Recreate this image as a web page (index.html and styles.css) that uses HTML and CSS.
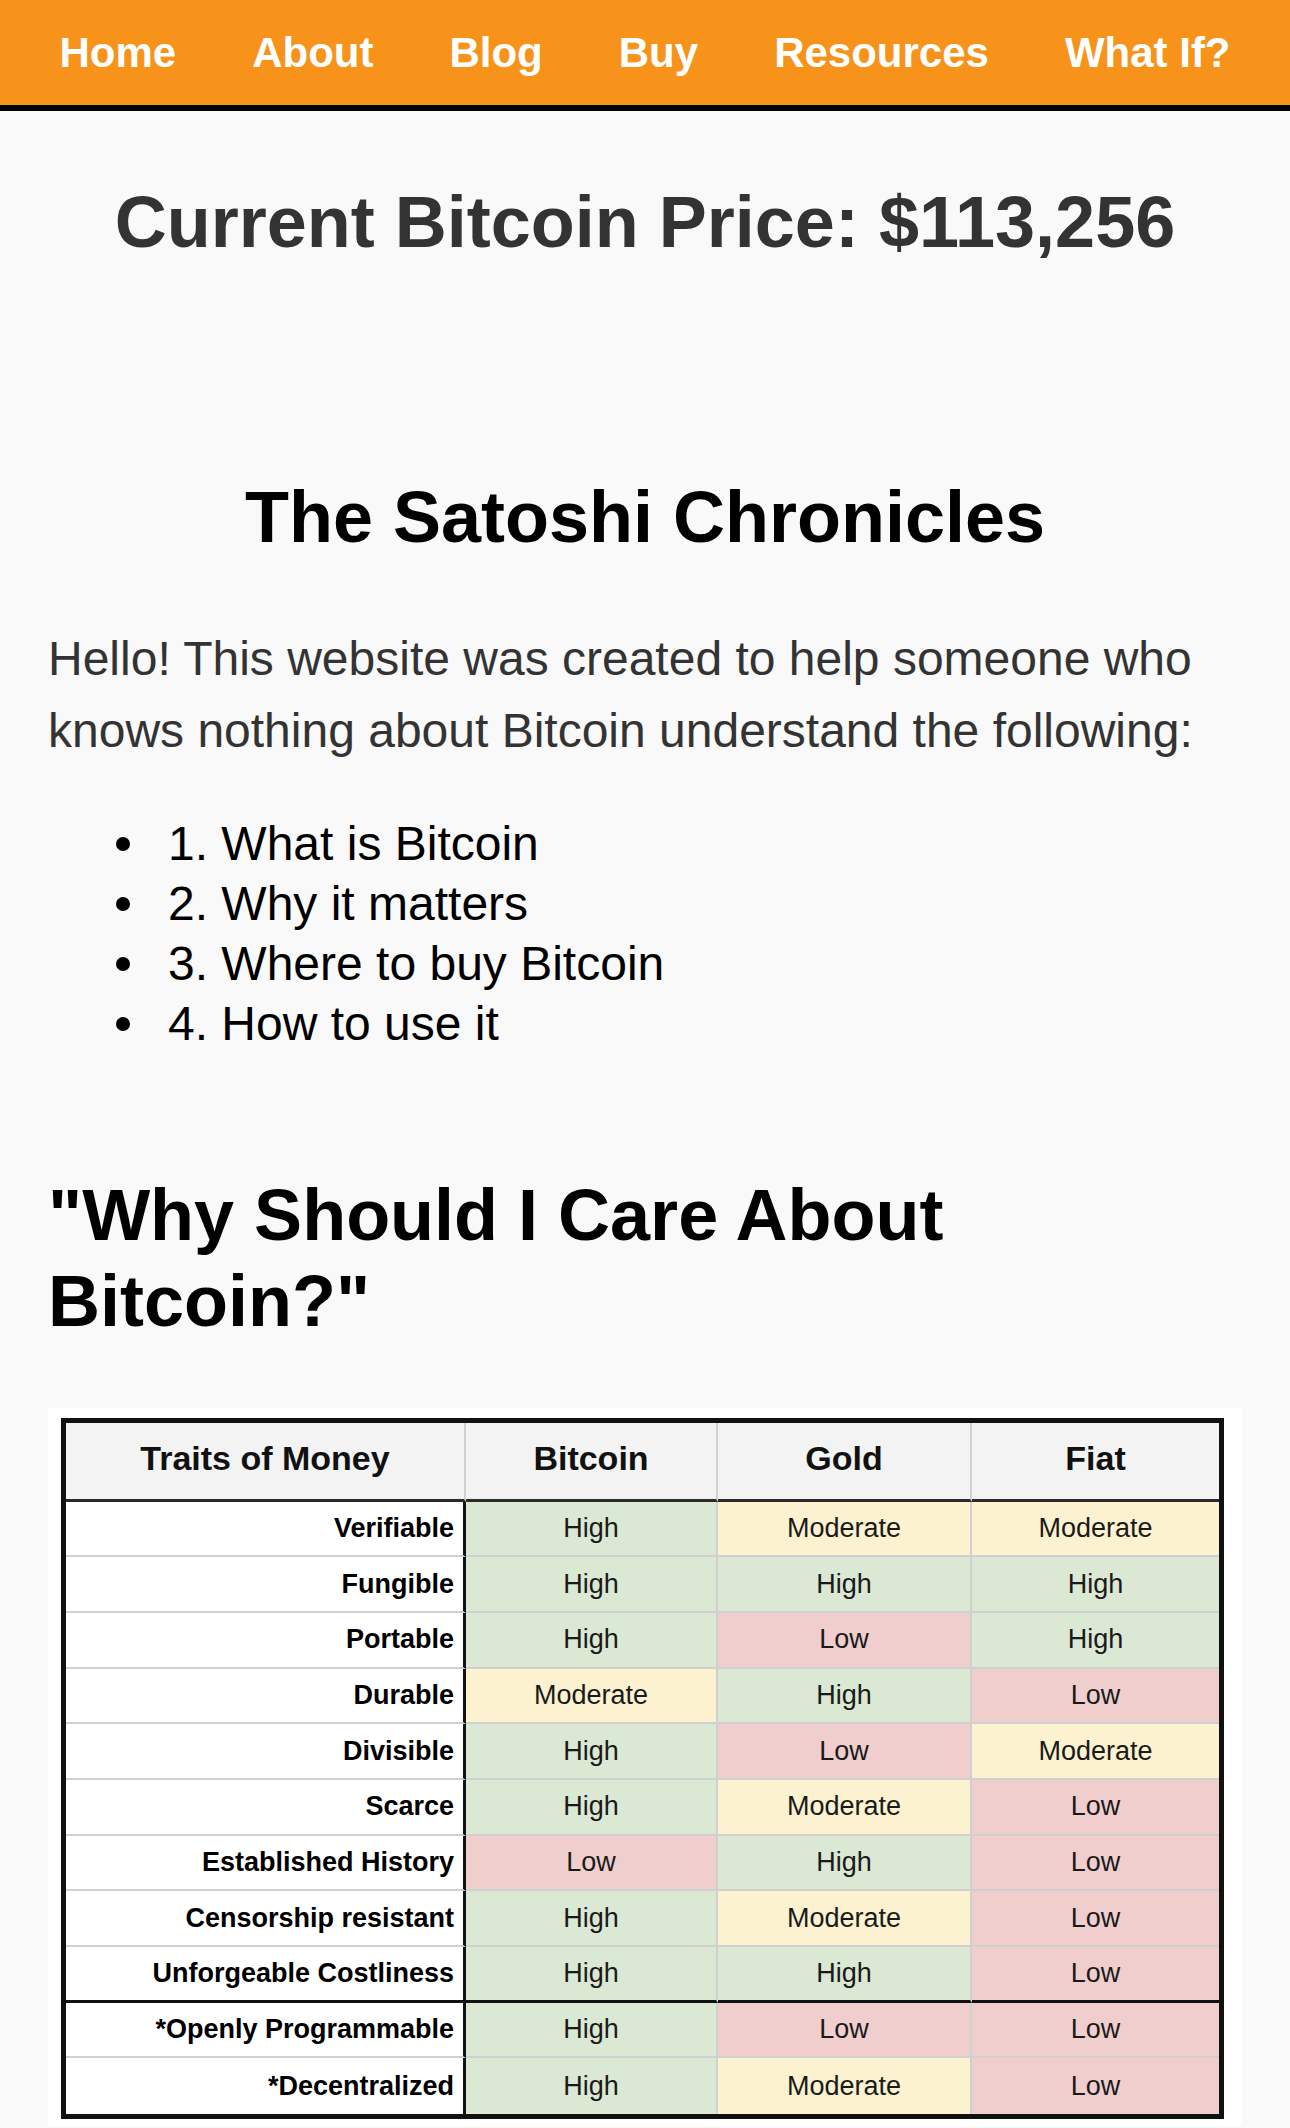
FILE: index.html
```html
<!DOCTYPE html>
<html lang="en">
<head>
<meta charset="utf-8">
<title>The Satoshi Chronicles</title>
<link rel="stylesheet" href="styles.css">
</head>
<body>
<nav class="topnav">
  <a href="#">Home</a>
  <a href="#">About</a>
  <a href="#">Blog</a>
  <a href="#">Buy</a>
  <a href="#">Resources</a>
  <a href="#">What If?</a>
</nav>
<main class="content">
  <h2 class="price">Current Bitcoin Price: $113,256</h2>
  <h1 class="title">The Satoshi Chronicles</h1>
  <p class="intro">Hello! This website was created to help someone who knows nothing about Bitcoin understand the following:</p>
  <ul class="goals">
    <li>1. What is Bitcoin</li>
    <li>2. Why it matters</li>
    <li>3. Where to buy Bitcoin</li>
    <li>4. How to use it</li>
  </ul>
  <h2 class="why">"Why Should I Care About Bitcoin?"</h2>
  <div class="table-card">
    <div class="traits">
      <div class="cell head">Traits of Money</div>
      <div class="cell head">Bitcoin</div>
      <div class="cell head">Gold</div>
      <div class="cell head last">Fiat</div>

      <div class="cell label">Verifiable</div>
      <div class="cell hi">High</div>
      <div class="cell mid">Moderate</div>
      <div class="cell mid last">Moderate</div>

      <div class="cell label">Fungible</div>
      <div class="cell hi">High</div>
      <div class="cell hi">High</div>
      <div class="cell hi last">High</div>

      <div class="cell label">Portable</div>
      <div class="cell hi">High</div>
      <div class="cell lo">Low</div>
      <div class="cell hi last">High</div>

      <div class="cell label">Durable</div>
      <div class="cell mid">Moderate</div>
      <div class="cell hi">High</div>
      <div class="cell lo last">Low</div>

      <div class="cell label">Divisible</div>
      <div class="cell hi">High</div>
      <div class="cell lo">Low</div>
      <div class="cell mid last">Moderate</div>

      <div class="cell label">Scarce</div>
      <div class="cell hi">High</div>
      <div class="cell mid">Moderate</div>
      <div class="cell lo last">Low</div>

      <div class="cell label">Established History</div>
      <div class="cell lo">Low</div>
      <div class="cell hi">High</div>
      <div class="cell lo last">Low</div>

      <div class="cell label">Censorship resistant</div>
      <div class="cell hi">High</div>
      <div class="cell mid">Moderate</div>
      <div class="cell lo last">Low</div>

      <div class="cell label sep">Unforgeable Costliness</div>
      <div class="cell hi sep">High</div>
      <div class="cell hi sep">High</div>
      <div class="cell lo last sep">Low</div>

      <div class="cell label">*Openly Programmable</div>
      <div class="cell hi">High</div>
      <div class="cell lo">Low</div>
      <div class="cell lo last">Low</div>

      <div class="cell label end">*Decentralized</div>
      <div class="cell hi end">High</div>
      <div class="cell mid end">Moderate</div>
      <div class="cell lo last end">Low</div>
    </div>
  </div>
</main>
</body>
</html>
```

FILE: styles.css
```css
html, body {
  margin: 0;
  padding: 0;
}

body {
  background: #f9f9f9;
  font-family: "Liberation Sans", Arial, Helvetica, sans-serif;
  color: #333;
}

.topnav {
  height: 105px;
  background: #f7931a;
  border-bottom: 6px solid #000;
  display: flex;
  justify-content: center;
  align-items: center;
  gap: 76px;
}

.topnav a {
  color: #fff;
  text-decoration: none;
  font-weight: bold;
  font-size: 42px;
}

.content {
  padding: 0 48px;
}

.price {
  margin: 68px 0 0;
  font-size: 72px;
  line-height: 1.2;
  font-weight: bold;
  text-align: center;
  color: #333;
}

.title {
  margin: 209px 0 0;
  font-size: 72px;
  line-height: 1.2;
  font-weight: bold;
  text-align: center;
  color: #000;
}

.intro {
  margin: 62px 0 0;
  font-size: 48px;
  line-height: 72px;
  color: #333;
}

.goals {
  margin: 47px 0 0;
  padding-left: 68px;
  list-style: none;
  font-size: 48px;
  line-height: 60px;
  color: #000;
}

.goals li::before {
  content: "";
  display: inline-block;
  width: 14px;
  height: 14px;
  border-radius: 50%;
  background: #000;
  vertical-align: 9px;
  margin-right: 38px;
}

.why {
  margin: 118px 0 0;
  font-size: 72px;
  line-height: 1.2;
  font-weight: bold;
  color: #000;
}

.table-card {
  margin-top: 63px;
  background: #fff;
  padding: 10px 16px 7px 13px;
}

.traits {
  box-sizing: border-box;
  width: 1163px;
  border: 5px solid #111;
  display: grid;
  grid-template-columns: 400px 252px 254px 1fr;
  grid-template-rows: 79px repeat(11, 55.7px);
  background: #fff;
}

.cell {
  box-sizing: border-box;
  display: flex;
  align-items: center;
  justify-content: center;
  border-right: 2px solid #d0d0d0;
  border-bottom: 2px solid #d0d0d0;
  font-size: 27px;
  color: #1a1a1a;
  white-space: nowrap;
}

.cell.last {
  border-right: none;
}

.cell.head {
  background: #f3f3f3;
  font-weight: bold;
  font-size: 34px;
  color: #111;
  border-bottom: 3px solid #2a2a2a;
  padding-bottom: 4px;
}

.cell.head:first-child {
  border-right: 2px solid #d0d0d0;
}

.cell.label {
  justify-content: flex-end;
  padding-right: 9px;
  font-weight: bold;
  color: #000;
  background: #fff;
  border-right: 3px solid #111;
}

.cell.hi {
  background: #dbe8d4;
}

.cell.mid {
  background: #fdf2cf;
}

.cell.lo {
  background: #f1cece;
}

.cell.sep {
  border-bottom: 3px solid #111;
}

.cell.end {
  border-bottom: none;
}
```
